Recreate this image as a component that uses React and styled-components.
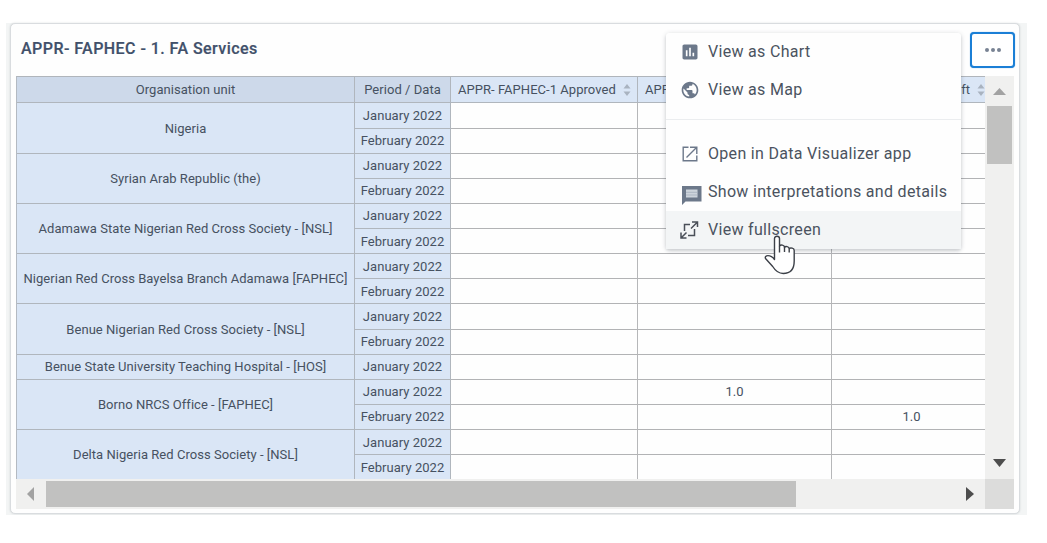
import React from "react";
import styled, { createGlobalStyle, css } from "styled-components";
import { MdAssessment, MdPublic } from "react-icons/md";

const GlobalStyle = createGlobalStyle`
  *, *::before, *::after { box-sizing: border-box; }
  body {
    margin: 0;
    background: #fff;
    font-family: Roboto, "Liberation Sans", sans-serif;
    color: #465161;
    overflow: hidden;
  }
`;

const Backdrop = styled.main`
  width: 1021px;
  height: 492px;
  margin: 23px 0 0 6px;
  padding: 0 7px 1px 4px;
  background: #f3f5f5;
`;

const Card = styled.section`
  position: relative;
  display: flex;
  flex-direction: column;
  height: 491px;
  padding: 0 5px 4px;
  background: #fefefe;
  border: 1px solid #d9dcdf;
  border-radius: 5px;
  box-shadow: 0 0 2px rgba(70, 80, 90, 0.2);
`;

const CardHeader = styled.header`
  display: flex;
  justify-content: space-between;
  height: 52px;
  padding: 8px 0 0 5px;
  margin-right: -1px;
`;

const Title = styled.h1`
  margin: 0;
  font-size: 16px;
  line-height: 34px;
  font-weight: 500;
  letter-spacing: 0.45px;
  white-space: nowrap;
  color: #41506a;
  -webkit-text-stroke: 0.2px #41506a;
`;

const MoreButton = styled.button`
  display: flex;
  align-items: center;
  justify-content: center;
  gap: 2px;
  width: 45px;
  height: 36px;
  padding: 0;
  border: 2px solid #1b7fd6;
  border-radius: 4px;
  background: #fff;
  box-shadow: 0 0 1px #4b9be0;
`;

const Dot = styled.span`
  width: 4px;
  height: 4px;
  border-radius: 50%;
  background: #788293;
`;

const ScrollArea = styled.div`
  display: grid;
  grid-template: 403px 30px / 969px 29px;
`;

const Viewport = styled.div`
  overflow: hidden;
`;

const Table = styled.div`
  display: grid;
  grid-template-columns: 338px 96px 187px 194px 160px;
  grid-template-rows: 26.4px repeat(15, 25.13px);
  width: 976px;
  border-top: 1px solid #b0b5bb;
  border-left: 1px solid #b4bac2;
  font-size: 13px;
`;

const Cell = styled.div`
  display: flex;
  align-items: center;
  justify-content: center;
  grid-row: span ${(p) => p.$rows || 1};
  border-right: 1px solid #b6b7b9;
  border-bottom: 1px solid #b2b3b5;
  white-space: nowrap;
  background: #fefefe;
`;

const LabelCell = styled(Cell)`
  background: #dae6f6;
  border-color: #b0b6bd;
  letter-spacing: 0.04px;
`;

const CornerCell = styled(LabelCell)`
  background: #cdd9ea;
`;

const DataHeaderCell = styled(LabelCell)`
  justify-content: space-between;
  padding-left: 7px;
  padding-right: 6px;
`;

const scrollBar = css`
  display: flex;
  align-items: center;
  justify-content: space-between;
  background: #f0f0ef;
`;

const VerticalBar = styled.div`
  ${scrollBar}
  flex-direction: column;
  padding: 12px 0 12px;
`;

const HorizontalBar = styled.div`
  ${scrollBar}
  padding: 0 11px 0 11px;
`;

const VerticalThumb = styled.div`
  width: 25px;
  height: 58px;
  margin: 11px 1px auto 0;
  background: #c1c1c0;
`;

const HorizontalThumb = styled.div`
  width: 750px;
  height: 26px;
  margin: 0 auto 0 12px;
  background: #c1c1c0;
`;

const ScrollCorner = styled.div`
  background: #dcdcdb;
`;

const Menu = styled.ul`
  position: absolute;
  top: 9px;
  left: 655px;
  width: 295px;
  margin: 0;
  padding: 0;
  list-style: none;
  background: #fefefe;
  border-radius: 3px;
  box-shadow: 0 1px 5px rgba(50, 60, 70, 0.2), 0 2px 3px rgba(50, 60, 70, 0.12);
`;

const MenuItem = styled.li`
  display: flex;
  align-items: center;
  height: 38px;
  padding: 0 0 2px 14px;
  font-size: 16px;
  letter-spacing: 0.31px;
  white-space: nowrap;
  color: #4b5360;
  background: ${(p) => (p.$active ? "#f3f5f6" : "transparent")};
`;

const MenuIcon = styled.span`
  display: flex;
  flex: 0 0 28px;
  padding-top: ${(p) => p.$drop ?? 2}px;
  padding-left: ${(p) => p.$inset || 0}px;
  color: ${(p) => (p.$dark ? "#4a4f58" : "#6c788a")};
  svg { display: block; flex: none; }
`;

const Divider = styled.li`
  height: 1px;
  margin: 10px 0 15px;
  background: #ebedef;
`;

const Pointer = styled.svg`
  position: absolute;
  top: 211px;
  left: 753px;
`;

function SortIcon() {
  return (
    <svg width="8" height="14" viewBox="0 0 8 14" fill="#a9b3c0">
      <path d="M4 1 7.5 5.6H.5zM4 13 .5 8.4h7z" />
    </svg>
  );
}

function Arrow({ direction, color }) {
  const shapes = {
    up: [13, 7, "M6.5 0 13 7H0z"],
    down: [13, 8, "M0 0h13L6.5 8z"],
    left: [7, 14, "M7 0v14L0 7z"],
    right: [8, 14, "M0 0l8 7-8 7z"],
  };
  const [w, h, d] = shapes[direction];
  return (
    <svg width={w} height={h} viewBox={`0 0 ${w} ${h}`} fill={color}>
      <path d={d} />
    </svg>
  );
}

function LaunchIcon() {
  return (
    <svg width="16" height="16" viewBox="0 0 16 16" fill="none" stroke="currentColor" strokeWidth="1.4">
      <path d="M6.5 1.2H1.2v13.6h13.6V9.5M8 1.2h6.8V8M14.5 1.5 4.5 11.5" />
    </svg>
  );
}

function CommentIcon() {
  return (
    <svg width="20" height="19" viewBox="0 0 20 19">
      <path d="M0 0h19.5v15.5H3.5L0 19z" fill="currentColor" />
      <path d="M4 3.5h11.5v8H4z" fill="#cdd4dc" />
      <path d="M4 6.3h11.5M4 9h11.5" stroke="#a5afbc" strokeWidth="0.8" />
    </svg>
  );
}

function FullscreenIcon() {
  return (
    <svg width="19" height="18" viewBox="0 0 19 18" fill="none" stroke="currentColor" strokeWidth="1.5">
      <path d="M10 3.5H4.500V10M8 14.500h6.500V8M12 1h5.500v5M17 1.500 11 7.500M1 11.500V17h5.500M1.500 16.500l5-5" />
    </svg>
  );
}

const units = [
  { name: "Nigeria", months: 2 },
  { name: "Syrian Arab Republic (the)", months: 2 },
  { name: "Adamawa State Nigerian Red Cross Society - [NSL]", months: 2 },
  { name: "Nigerian Red Cross Bayelsa Branch Adamawa [FAPHEC]", months: 2 },
  { name: "Benue Nigerian Red Cross Society - [NSL]", months: 2 },
  { name: "Benue State University Teaching Hospital - [HOS]", months: 1 },
  { name: "Borno NRCS Office - [FAPHEC]", months: 2, values: [["", "1.0", ""], ["", "", "1.0"]] },
  { name: "Delta Nigeria Red Cross Society - [NSL]", months: 2 },
];
const periods = ["January 2022", "February 2022"];

function PivotTable() {
  return (
    <Table>
      <CornerCell>Organisation unit</CornerCell>
      <CornerCell>Period / Data</CornerCell>
      <DataHeaderCell>APPR- FAPHEC-1 Approved<SortIcon /></DataHeaderCell>
      <DataHeaderCell>APPR- FAPHEC-1 Complete<SortIcon /></DataHeaderCell>
      <DataHeaderCell>APPR- FAPHEC-1 Draft<SortIcon /></DataHeaderCell>
      {units.map((unit) => (
        <React.Fragment key={unit.name}>
          <LabelCell $rows={unit.months}>{unit.name}</LabelCell>
          {periods.slice(0, unit.months).map((period, i) => (
            <React.Fragment key={period}>
              <LabelCell>{period}</LabelCell>
              {(unit.values?.[i] || ["", "", ""]).map((value, j) => (
                <Cell key={j}>{value}</Cell>
              ))}
            </React.Fragment>
          ))}
        </React.Fragment>
      ))}
    </Table>
  );
}

export default function App() {
  return (
    <>
      <GlobalStyle />
      <Backdrop>
        <Card>
          <CardHeader>
            <Title>APPR- FAPHEC - 1. FA Services</Title>
            <MoreButton aria-label="More"><Dot /><Dot /><Dot /></MoreButton>
          </CardHeader>
          <ScrollArea>
            <Viewport><PivotTable /></Viewport>
            <VerticalBar>
              <Arrow direction="up" color="#a2a2a2" />
              <VerticalThumb />
              <Arrow direction="down" color="#4d4d4d" />
            </VerticalBar>
            <HorizontalBar>
              <Arrow direction="left" color="#a2a2a2" />
              <HorizontalThumb />
              <Arrow direction="right" color="#4d4d4d" />
            </HorizontalBar>
            <ScrollCorner />
          </ScrollArea>
          <Menu>
            <MenuItem><MenuIcon><MdAssessment size={20} /></MenuIcon>View as Chart</MenuItem>
            <MenuItem><MenuIcon><MdPublic size={20} /></MenuIcon>View as Map</MenuItem>
            <Divider />
            <MenuItem><MenuIcon $inset={2}><LaunchIcon /></MenuIcon>Open in Data Visualizer app</MenuItem>
            <MenuItem><MenuIcon $inset={2} $drop={8}><CommentIcon /></MenuIcon>Show interpretations and details</MenuItem>
            <MenuItem $active><MenuIcon $dark><FullscreenIcon /></MenuIcon>View fullscreen</MenuItem>
          </Menu>
          <Pointer width="33" height="40" viewBox="0 0 33 40" fill="#fff" stroke="#3c4048" strokeWidth="1.4" strokeLinejoin="round">
            <path d="M10.5 22V3.500c0-3 5-3 5 0V11c1-1.500 5-1.200 5 1.200 1-1.200 4.500-.8 4.700 1.300 1.300-1 5-.7 5 2V26c0 8-4 12.500-11 12.500-5 0-8-3-10.500-7L1.500 23.500c-1.500-3.500 5-4.500 9 1z" />
            <path d="M15.500 11v6.500M20.500 12v5M25.200 13.500v4" fill="none" />
          </Pointer>
        </Card>
      </Backdrop>
    </>
  );
}
